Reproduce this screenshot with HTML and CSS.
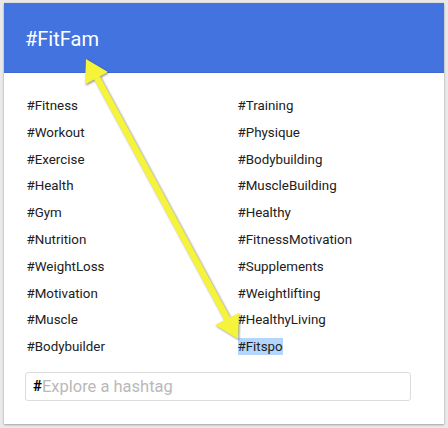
FILE: index.html
```html
<!DOCTYPE html>
<html>
<head>
<meta charset="utf-8">
<link rel="stylesheet" href="styles.css">
</head>
<body>
<div class="stage">
  <div class="card">
    <div class="header">#FitFam</div>
    <div class="tags">
      <div class="tag">#Fitness</div><div class="tag">#Training</div>
      <div class="tag">#Workout</div><div class="tag">#Physique</div>
      <div class="tag">#Exercise</div><div class="tag">#Bodybuilding</div>
      <div class="tag">#Health</div><div class="tag">#MuscleBuilding</div>
      <div class="tag">#Gym</div><div class="tag">#Healthy</div>
      <div class="tag">#Nutrition</div><div class="tag">#FitnessMotivation</div>
      <div class="tag">#WeightLoss</div><div class="tag">#Supplements</div>
      <div class="tag">#Motivation</div><div class="tag">#Weightlifting</div>
      <div class="tag">#Muscle</div><div class="tag">#HealthyLiving</div>
      <div class="tag">#Bodybuilder</div><div class="tag"><span class="selected">#Fitspo</span></div>
    </div>
    <div class="search">
      <span class="hash">#</span><span class="placeholder">Explore a hashtag</span>
    </div>
  </div>
  <svg class="arrow" width="448" height="428" viewBox="0 0 448 428">
    <g class="arrow-shape">
      <line x1="96" y1="76" x2="228" y2="320" stroke="#f6f43a" stroke-width="6.5"/>
      <polygon points="86,59 108,72 85,84.5" fill="#f6f43a"/>
      <polygon points="238,339 215,325 239,313" fill="#f6f43a"/>
    </g>
  </svg>
</div>
</body>
</html>
```
FILE: styles.css
```css
* { box-sizing: border-box; }
html, body {
  margin: 0;
  padding: 0;
  background: #e9e9e9;
}
body {
  font-family: Roboto, "Noto Sans", sans-serif;
  color: #212121;
}
.stage {
  position: relative;
  width: 448px;
  height: 428px;
  padding: 3px 4px 0 4px;
}
.card {
  width: 440px;
  height: 421px;
  background: #fff;
  box-shadow: 0 1px 2px rgba(0, 0, 0, 0.28), 0 0 1px rgba(0, 0, 0, 0.2);
}
.header {
  height: 70px;
  background: #4373df;
  color: #fff;
  font-size: 20px;
  line-height: 24px;
  padding: 24px 20px 0 21px;
  border-bottom: 1px solid #3d6ad6;
}
.tags {
  display: grid;
  grid-template-columns: 211px 1fr;
  grid-auto-rows: 26.8px;
  padding: 20px 0 0 22.5px;
  font-size: 13.35px;
  line-height: 26.8px;
}
.tag {
  white-space: nowrap;
}
.selected {
  background: #b4d5fd;
  padding: 1px 0;
}
.search {
  margin: 11px 0 0 21px;
  width: 386px;
  height: 29px;
  border: 1px solid #dcdcdc;
  border-radius: 3px;
  padding: 0 0 0 7px;
  display: flex;
  align-items: center;
  font-size: 14px;
}
.hash {
  color: #000;
  font-weight: 700;
  font-size: 15px;
}
.placeholder {
  color: #b9b9b9;
  font-size: 16.5px;
}
.arrow {
  position: absolute;
  left: 0;
  top: 0;
  pointer-events: none;
}
.arrow-shape {
  filter: drop-shadow(1.5px 1.5px 1px rgba(0, 0, 0, 0.45));
}
```
